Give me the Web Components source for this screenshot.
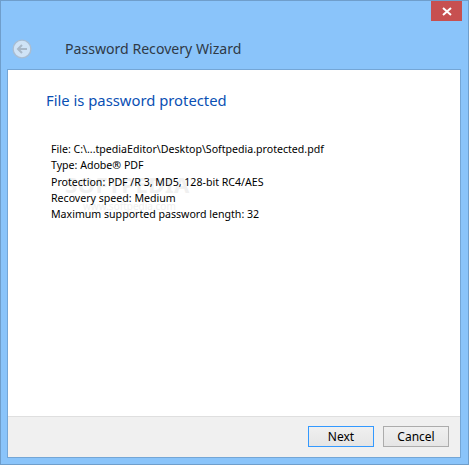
<!DOCTYPE html>
<html>
<head>
<meta charset="utf-8">
<title>Password Recovery Wizard</title>
<style>
  html, body { margin: 0; height: 100%; }
  body { font-family: "Noto Sans", "Open Sans", sans-serif; overflow: hidden; }
</style>
</head>
<body>
<wizard-window>
  <span slot="title">Password Recovery Wizard</span>
  <wizard-page heading="File is password protected">
    <div>File: C:\...tpediaEditor\Desktop\Softpedia.protected.pdf</div>
    <div>Type: Adobe® PDF</div>
    <div>Protection: PDF /R 3, MD5, 128-bit RC4/AES</div>
    <div>Recovery speed: Medium</div>
    <div>Maximum supported password length: 32</div>
  </wizard-page>
  <wizard-button slot="footer" focused>Next</wizard-button>
  <wizard-button slot="footer">Cancel</wizard-button>
</wizard-window>

<script>
// Ventana principal: marco azul, cabecera y pie con botones
class WizardWindow extends HTMLElement {
  constructor() {
    super();
    this.attachShadow({ mode: 'open' });
  }

  connectedCallback() {
    this.shadowRoot.innerHTML = `
      <style>
        :host {
          display: flex;
          flex-direction: column;
          box-sizing: border-box;
          width: 469px;
          height: 465px;
          background: #8ac4fa;
          border: 1px solid #6f9ecb;
          padding: 0 7px 6px 6px;
        }
        .caption {
          display: flex;
          justify-content: flex-end;
          height: 20px;
          flex: none;
        }
        .close {
          display: flex;
          align-items: center;
          justify-content: center;
          width: 31px;
          height: 20px;
          margin-right: -1px;
          background: #c75050;
        }
        .head {
          display: flex;
          align-items: center;
          box-sizing: border-box;
          height: 48px;
          flex: none;
          padding: 8px 0 0 5px;
          color: #2f3a47;
          font-size: 14.1px;
        }
        .back { width: 20px; height: 20px; margin-right: 33px; flex: none; }
        .title { margin-bottom: 2px; }
        .panel {
          display: flex;
          flex-direction: column;
          flex: 1;
          min-height: 0;
          border: 1px solid #74a6d6;
          background: #fff;
        }
        .body { flex: 1; min-height: 0; display: flex; }
        .foot {
          display: flex;
          justify-content: flex-end;
          gap: 9px;
          flex: none;
          box-sizing: border-box;
          height: 41px;
          padding: 9px 11px 0 0;
          background: #f0f0f0;
          border-top: 1px solid #dfdfdf;
        }
      </style>
      <div class="caption">
        <div class="close">
          <svg width="10" height="9" viewBox="0 0 10 9">
            <path d="M1 1 L9 8 M9 1 L1 8" stroke="#fff" stroke-width="2" fill="none"/>
          </svg>
        </div>
      </div>
      <div class="head">
        <svg class="back" viewBox="0 0 20 20">
          <circle cx="10" cy="10" r="8.9" fill="#cfe3f6" stroke="#a9bdd2" stroke-width="1.4"/>
          <path d="M15 10 H6 M10 6 L6 10 L10 14" stroke="#a8b8c8" stroke-width="2" fill="none"/>
        </svg>
        <div class="title"><slot name="title"></slot></div>
      </div>
      <div class="panel">
        <div class="body"><slot></slot></div>
        <div class="foot"><slot name="footer"></slot></div>
      </div>
    `;
  }
}

// Contenido de la página: encabezado azul, datos y marca de agua
class WizardPage extends HTMLElement {
  constructor() {
    super();
    this.attachShadow({ mode: 'open' });
  }

  connectedCallback() {
    this.shadowRoot.innerHTML = `
      <style>
        :host {
          display: block;
          position: relative;
          flex: 1;
          padding: 18px 0 0 38px;
          color: #000;
        }
        h1 {
          margin: 0 0 29px 0;
          font-size: 14.8px;
          line-height: 24px;
          font-weight: 400;
          color: #0a50b4;
        }
        .info {
          position: relative;
          padding-left: 5px;
          font-size: 10.6px;
          line-height: 16.3px;
        }
        .mark {
          position: absolute;
          left: 57px;
          top: 102px;
          color: #f0f0f0;
          font-size: 22px;
          font-weight: 700;
          letter-spacing: 0.5px;
          line-height: 24px;
        }
        .mark small {
          display: block;
          margin-top: 3px;
          padding-left: 18px;
          font-size: 10px;
          font-weight: 400;
          letter-spacing: 0;
          line-height: 14px;
        }
      </style>
      <div class="mark">SOFTPEDIA<small>www.softpedia.com</small></div>
      <h1>${this.getAttribute('heading')}</h1>
      <div class="info"><slot></slot></div>
    `;
  }
}

// Botón del pie; el atributo focused le pone el borde azul
class WizardButton extends HTMLElement {
  constructor() {
    super();
    this.attachShadow({ mode: 'open' });
  }

  connectedCallback() {
    this.shadowRoot.innerHTML = `
      <style>
        :host {
          display: flex;
          align-items: center;
          justify-content: center;
          box-sizing: border-box;
          width: 66px;
          height: 21px;
          font-size: 12px;
          color: #000;
          background: linear-gradient(#f0f0f0, #e5e5e5);
          border: 1px solid #acacac;
        }
        :host([focused]) { border-color: #3399ff; }
      </style>
      <slot></slot>
    `;
  }
}

customElements.define('wizard-window', WizardWindow);
customElements.define('wizard-page', WizardPage);
customElements.define('wizard-button', WizardButton);
</script>
</body>
</html>
